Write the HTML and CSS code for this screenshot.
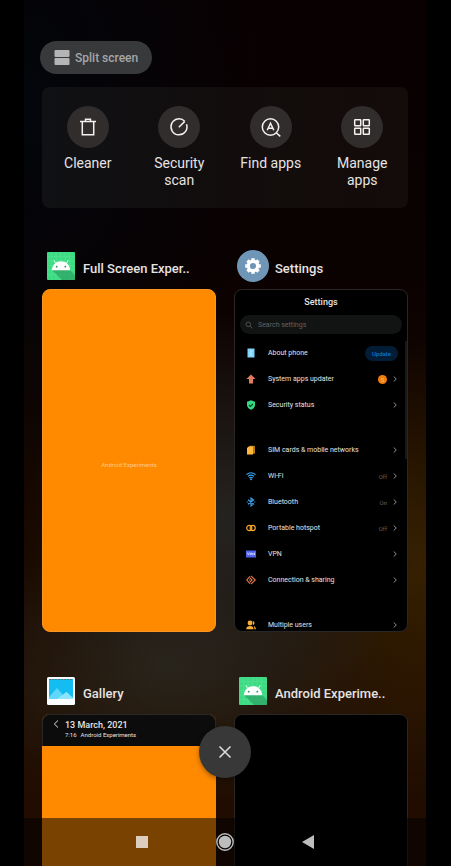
FILE: index.html
```html
<!DOCTYPE html>
<html lang="en">
<head>
<meta charset="utf-8">
<meta name="viewport" content="width=device-width, initial-scale=1">
<title>Recent apps</title>
<link rel="stylesheet" href="styles.css">
</head>
<body>
<svg class="defs" aria-hidden="true">
  <symbol id="chevron" viewBox="0 0 6 8"><path d="M1.700 1.500 L4.300 4 L1.700 6.500" fill="none" stroke="#8c8c8c" stroke-width="1"/></symbol>
  <symbol id="android" viewBox="0 0 28 28">
    <rect width="28" height="28" rx="1" fill="#3ddc84"/>
    <path d="M0 4.500H28M0 9H28M0 13.500H28M0 18H28M0 22.500H28M4.500 0V28M9 0V28M13.500 0V28M18 0V28M22.500 0V28" stroke="#6be5a2" stroke-width=".5" opacity=".7"/>
    <path d="M5 18 L15 28 H28 V23 L22.500 17.500Z" fill="#2a9b60" opacity=".65"/>
    <path d="M4.800 18.300C5.400 12.200 9.300 9.200 14 9.200S22.600 12.200 23.200 18.300Z" fill="#fff"/>
    <path d="M8.800 11.800L6.900 8.300M19.200 11.800L21.100 8.300" stroke="#fff" stroke-width=".9"/>
    <circle cx="9.700" cy="14.700" r=".9" fill="#3b8a60"/><circle cx="18.300" cy="14.700" r=".9" fill="#3b8a60"/>
  </symbol>
</svg>
<main class="phone">
  <button class="split" type="button">
    <svg width="16" height="15" viewBox="0 0 16 15" fill="#b5b5b5"><rect x=".5" width="15" height="7" rx="1"/><rect x=".5" y="8" width="15" height="7" rx="1"/></svg>
    Split screen
  </button>

  <section class="tools" aria-label="Shortcuts">
    <button class="tool" type="button"><span class="disc"><svg width="20" height="20" viewBox="0 0 20 20"><path d="M2 4.500H18M7.500 4.200V2.200H12.500V4.200M4.300 4.500V17.800H15.700V4.500"/></svg></span>Cleaner</button>
    <button class="tool" type="button"><span class="disc"><svg width="20" height="20" viewBox="0 0 20 20"><path d="M15.700 4.300A8 8 0 1 0 17.500 7.200M9.800 10.300L15.800 4.400"/></svg></span>Security scan</button>
    <button class="tool" type="button"><span class="disc"><svg width="20" height="20" viewBox="0 0 20 20"><circle cx="9.500" cy="10" r="8.200"/><path d="M15.200 15.800L19.300 19.400M6.200 13.300L9.500 6.200L12.800 13.300M7.400 11.200H11.600"/></svg></span>Find apps</button>
    <button class="tool" type="button"><span class="disc"><svg width="20" height="20" viewBox="0 0 20 20"><rect x="2.700" y="2.700" width="6" height="6" rx=".5"/><rect x="11.300" y="2.700" width="6" height="6" rx=".5"/><rect x="2.700" y="11.300" width="6" height="6" rx=".5"/><rect x="11.300" y="11.300" width="6" height="6" rx=".5"/></svg></span>Manage apps</button>
  </section>

  <section class="apps" aria-label="Open apps">
    <article class="app">
      <h2 class="app-title"><svg class="app-icon"><use href="#android"/></svg>Full Screen Exper..</h2>
      <div class="card orange"><span>Android Experiments</span></div>
    </article>

    <article class="app">
      <h2 class="app-title round"><svg class="app-icon" viewBox="0 0 32 32">
        <circle cx="16" cy="16" r="16" fill="#7096b7"/>
        <circle cx="16" cy="16" r="4.700" fill="none" stroke="#fff" stroke-width="3.200"/>
        <path d="M16 8.200V11M16 21V23.800M8.200 16H11M21 16H23.800M10.500 10.500L12.300 12.300M19.700 19.700L21.500 21.500M10.500 21.500L12.300 19.700M19.700 12.300L21.500 10.500" stroke="#fff" stroke-width="3.400"/>
      </svg>Settings</h2>
      <div class="card settings">
        <h3>Settings</h3>
        <label class="search"><svg width="8" height="8" viewBox="0 0 8 8" fill="none" stroke="#555" stroke-width=".9"><circle cx="3.300" cy="3.300" r="2.300"/><path d="M5 5L7.300 7.300"/></svg><input type="search" placeholder="Search settings" aria-label="Search settings"></label>
        <div class="group">
          <button class="row" type="button"><svg viewBox="0 0 10 10"><rect x="1.500" y=".5" width="7" height="9" fill="#7fd4fa"/><path d="M4 3H6.500M3.500 5H6M4 7H6.500" stroke="#c4edff"/></svg><span>About phone</span><b class="update">Update</b></button>
          <button class="row" type="button"><svg viewBox="0 0 10 10"><path d="M5 .4L9.600 5H7V9.500H3V5H.4Z" fill="#e07a60"/></svg><span>System apps updater</span><b class="badge">5</b><svg class="chev"><use href="#chevron"/></svg></button>
          <button class="row" type="button"><svg viewBox="0 0 10 10"><path d="M5 .3L9 1.700V5C9 7.300 7.200 9 5 9.800C2.800 9 1 7.300 1 5V1.700Z" fill="#37d883"/><path d="M3 5L4.500 6.400L7 3.800" fill="none" stroke="#063c20" stroke-width="1.100"/></svg><span>Security status</span><svg class="chev"><use href="#chevron"/></svg></button>
        </div>
        <div class="group">
          <button class="row" type="button"><svg viewBox="0 0 10 10"><rect x="3" y=".7" width="6" height="8" rx="1" fill="#b47c10"/><path d="M1 3L2.700 1.500H7V9.500H1Z" fill="#ffb83d"/></svg><span>SIM cards &amp; mobile networks</span><svg class="chev"><use href="#chevron"/></svg></button>
          <button class="row" type="button"><svg viewBox="0 0 10 10" fill="none" stroke="#38a8f5" stroke-width="1.100"><path d="M.4 3.700Q5 -.1 9.600 3.700M1.900 5.400Q5 2.900 8.100 5.400M3.300 7Q5 5.600 6.700 7"/><circle cx="5" cy="8.300" r=".4"/></svg><span>Wi-Fi</span><i>Off</i><svg class="chev"><use href="#chevron"/></svg></button>
          <button class="row" type="button"><svg viewBox="0 0 10 10" fill="none" stroke="#38a8f5" stroke-width="1.100"><path d="M2 2.700L7.500 7L5 9V1L7.500 3L2 7.300"/><path d="M.8 5H1.800M8.300 5H9.300"/></svg><span>Bluetooth</span><i>On</i><svg class="chev"><use href="#chevron"/></svg></button>
          <button class="row" type="button"><svg viewBox="0 0 10 10" fill="none" stroke="#f5a72d" stroke-width="1.200"><circle cx="3.300" cy="5" r="2.600"/><circle cx="6.700" cy="5" r="2.600"/></svg><span>Portable hotspot</span><i>Off</i><svg class="chev"><use href="#chevron"/></svg></button>
          <button class="row" type="button"><svg viewBox="0 0 10 10"><rect y="1.500" width="10" height="7" fill="#4f62ef"/><path d="M1.200 3.500L2.300 6L3.300 3.500M4.300 6.300V4H5.600V5.300H4.500M6.700 6.300V4L8.500 6V3.600" fill="none" stroke="#dfe4ff" stroke-width=".7"/></svg><span>VPN</span><svg class="chev"><use href="#chevron"/></svg></button>
          <button class="row" type="button"><svg viewBox="0 0 10 10" fill="none" stroke="#e57b50" stroke-width="1.100"><path d="M4 1.400L.8 5L4 8.600M4 3L6 5L4 7M5 .9L9.200 5L5 9.100M3 5H4"/></svg><span>Connection &amp; sharing</span><svg class="chev"><use href="#chevron"/></svg></button>
        </div>
        <div class="group">
          <button class="row" type="button"><svg viewBox="0 0 10 10" fill="#f9ae35"><circle cx="4" cy="3" r="2.400"/><path d="M.2 9.300C.2 7 1.800 6 4 6S7.500 7 7.500 9.300Z"/><path d="M6.800 1C9 1.300 9 4.700 6.900 5.100M7.500 6C9.200 6.400 9.900 7.500 9.900 9.300H8.400C8.400 7.800 8.200 7 7.500 6Z"/></svg><span>Multiple users</span><svg class="chev"><use href="#chevron"/></svg></button>
        </div>
        <span class="scrollbar"></span>
      </div>
    </article>

    <article class="app">
      <h2 class="app-title"><svg class="app-icon" viewBox="0 0 28 28">
        <rect width="28" height="28" rx="1.500" fill="#fbfdfe"/><rect x="2" y="2" width="24" height="20" fill="#14bdf1"/>
        <path d="M2 2.500H26" stroke="#477b8b" stroke-dasharray="2 1"/>
        <path d="M2 20L10 11L16 18L19.500 15L26 21V22H2Z" fill="#5fd6fa"/><path d="M10 22L19.500 15L26 21V22Z" fill="#8ce5ff"/>
      </svg>Gallery</h2>
      <div class="card gallery">
        <header><svg width="6" height="8" viewBox="0 0 6 8"><path d="M5 .5L1.300 4L5 7.500" fill="none" stroke="#ddd"/></svg><div><h3>13 March, 2021</h3><p><span>7:16</span><span>Android Experiments</span></p></div></header>
      </div>
    </article>

    <article class="app">
      <h2 class="app-title"><svg class="app-icon"><use href="#android"/></svg>Android Experime..</h2>
      <div class="card"></div>
    </article>
  </section>

  <button class="close" type="button" aria-label="Clear all"><svg width="14" height="14" viewBox="0 0 14 14"><path d="M1.500 1.500L12.500 12.500M12.500 1.500L1.500 12.500" stroke="#e0e0e0" stroke-width="1.500"/></svg></button>
  <nav class="navbar" aria-label="System">
    <button type="button" aria-label="Recents"><svg width="12" height="12"><rect width="12" height="12" fill="#dccdbd"/></svg></button>
    <button type="button" aria-label="Home"><svg width="18" height="18" viewBox="0 0 18 18"><circle cx="9" cy="9" r="8.200" fill="#080503" stroke="#bdbdbd" stroke-width="1.400"/><circle cx="9" cy="9" r="6.200" fill="#bdbdbd"/></svg></button>
    <button type="button" aria-label="Back"><svg width="12" height="14" viewBox="0 0 12 14"><path d="M0 7L12 0V14Z" fill="#bdbdbd"/></svg></button>
  </nav>
</main>
</body>
</html>
```
FILE: styles.css
```css
* { box-sizing: border-box; }

body {
  margin: 0;
  padding: 0 25px 0 24px;
  background: #000;
  color: #e6e3e2;
  font-family: Roboto, "Liberation Sans", sans-serif;
}

h2, h3, p { margin: 0; }

button {
  margin: 0;
  padding: 0;
  border: 0;
  background: none;
  color: inherit;
  font: inherit;
}

svg { display: block; flex: none; }
.defs { position: absolute; width: 0; height: 0; }

.phone {
  position: relative;
  height: 100vh;
  overflow: hidden;
  padding: 41px 18px 0;
  background:
    radial-gradient(ellipse 50% 24% at 50% 60%, rgba(38, 38, 36, .9), transparent),
    radial-gradient(ellipse 55% 16% at 35% 77%, rgba(42, 38, 28, .9), transparent),
    radial-gradient(ellipse 45% 26% at 100% 65%, rgba(58, 35, 0, .9), transparent),
    radial-gradient(ellipse 60% 45% at 0% 12%, #03060b, transparent),
    linear-gradient(#080001, #0a0101 30%, #170800 60%, #210e02 82%, #220b00);
}

.split {
  display: flex;
  align-items: center;
  gap: 5px;
  height: 33px;
  margin-left: -2px;
  padding: 0 14px;
  border-radius: 17px;
  background: #37393b;
  color: #a5a6a7;
  font-size: 12px;
  font-weight: 500;
}

.tools {
  display: grid;
  grid-template-columns: repeat(4, 1fr);
  align-items: start;
  margin-top: 13px;
  padding: 19px 0;
  border-radius: 8px;
  background: linear-gradient(90deg, #101114, #120d0d 50%, #140b0a);
}

.tool {
  display: flex;
  flex-direction: column;
  align-items: center;
  gap: 7px;
  padding: 0 10px;
  font-size: 14px;
  line-height: 17px;
}

.disc {
  display: grid;
  place-items: center;
  width: 42px;
  height: 42px;
  border-radius: 50%;
  background: #302d2c;
}

.disc svg {
  fill: none;
  stroke: #f4f1ef;
  stroke-width: 1.5;
}

.apps {
  display: grid;
  grid-template-columns: 1fr 1fr;
  gap: 45px 18px;
  margin-top: 44px;
}

.app-title {
  display: flex;
  align-items: flex-end;
  gap: 8px;
  height: 28px;
  margin-bottom: 9px;
  padding-left: 5px;
  font-size: 13px;
  font-weight: 500;
  line-height: 22px;
  white-space: nowrap;
}

.app-icon { align-self: center; width: 28px; height: 28px; }
.round { gap: 6px; padding-left: 3px; }
.round .app-icon { width: 32px; height: 32px; }

.card {
  position: relative;
  height: 343px;
  overflow: hidden;
  border: 1px solid #292726;
  border-radius: 8px;
  background: #000;
}

.orange {
  display: grid;
  place-items: center;
  padding-top: 8px;
  border-color: #f99525;
  background: #ff8a00;
  color: #ffc98a;
  font-size: 6px;
}

.settings h3 {
  padding-top: 6px;
  font-size: 9px;
  font-weight: 500;
  line-height: 13px;
  text-align: center;
}

.search {
  display: flex;
  align-items: center;
  gap: 4px;
  height: 19px;
  margin: 6px 5px;
  padding: 0 5px;
  border-radius: 10px;
  background: #121413;
}

.search input {
  flex: 1;
  min-width: 0;
  padding: 0 0 0 1px;
  border: 0;
  outline: 0;
  background: none;
  color: #ccc;
  font: 7px Roboto, sans-serif;
}

.search input::placeholder { color: #626262; }

.group + .group { margin-top: 19px; }

.row {
  display: flex;
  align-items: center;
  width: 100%;
  height: 26px;
  padding: 0 9px 0 11px;
  font-size: 7px;
  text-align: left;
}

.row > svg:first-child { width: 10px; height: 10px; }
.row span { flex: 1; padding-left: 12px; white-space: nowrap; }
.row i { color: #626262; font-size: 6px; font-style: normal; }
.row .chev { width: 6px; height: 8px; margin-left: 5px; }

.update {
  padding: 0 7px;
  border-radius: 8px;
  background: #021d35;
  color: #0877cc;
  font-size: 6px;
  font-weight: 500;
  line-height: 15px;
}

.badge {
  width: 9px;
  border-radius: 50%;
  background: #f07d0c;
  color: #ffbd7c;
  font-size: 6px;
  font-weight: 400;
  line-height: 9px;
  text-align: center;
}

.scrollbar {
  position: absolute;
  top: 51px;
  right: 0;
  width: 2px;
  height: 118px;
  background: #171717;
}

.gallery { border: 0; background: #ff8a00; }

.gallery header {
  display: flex;
  align-items: flex-start;
  gap: 6px;
  height: 32px;
  padding: 5px 10px 0;
  border: 1px solid #292726;
  border-bottom: 0;
  border-radius: 8px 8px 0 0;
  background: #0c0c0c;
  box-shadow: 0 -8px 0 8px #0c0c0c;
  clip-path: inset(0);
}

.gallery h3 { font-size: 9px; font-weight: 500; line-height: 10px; }
.gallery p { display: flex; gap: 4px; font-size: 6px; line-height: 10px; }

.close {
  position: absolute;
  bottom: 88px;
  left: 50%;
  display: grid;
  place-items: center;
  width: 52px;
  height: 52px;
  margin-left: -26px;
  border-radius: 50%;
  background: #383838;
  box-shadow: 0 2px 5px rgba(0, 0, 0, .35);
}

.navbar {
  position: absolute;
  right: 0;
  bottom: 0;
  left: 0;
  display: grid;
  grid-template-columns: repeat(3, 1fr);
  height: 48px;
  padding: 0 19%;
  background: rgba(0, 0, 0, .52);
}

.navbar button { display: grid; place-items: center; }
```
